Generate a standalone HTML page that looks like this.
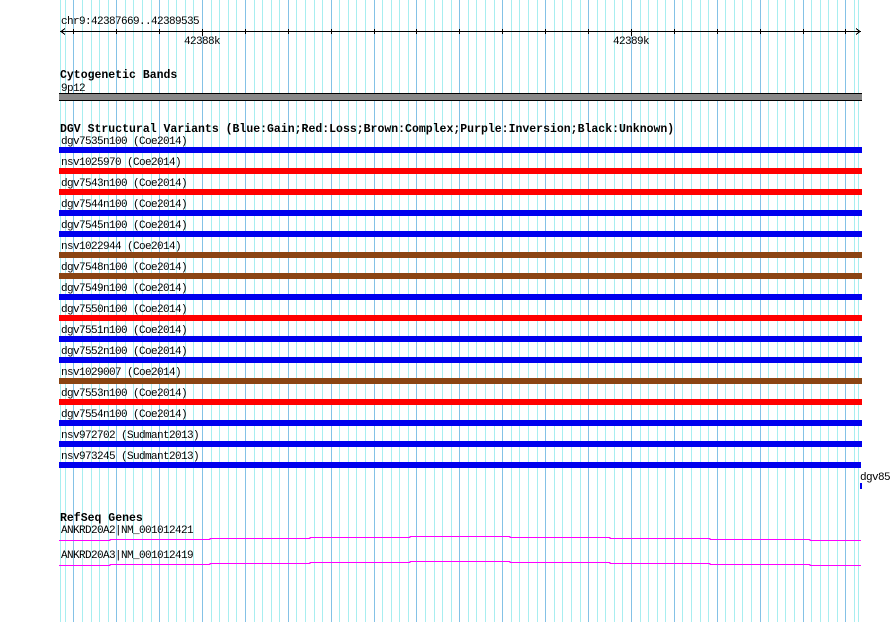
<!DOCTYPE html>
<html><head><meta charset="utf-8"><style>
html,body{margin:0;padding:0;background:#fff;width:890px;height:622px;overflow:hidden}
svg{display:block}
text{font-family:"Liberation Mono","DejaVu Sans Mono",monospace;font-size:11px;letter-spacing:-0.6px;fill:#000}
.b{font-weight:bold;font-size:11.5px;letter-spacing:0}
</style></head><body>
<svg width="890" height="622" xmlns="http://www.w3.org/2000/svg" shape-rendering="crispEdges">
<rect width="890" height="622" fill="#fff"/>
<g stroke="#a8eef0" stroke-width="1">
<path d="M60.5 0V622M65.5 0V622M82.5 0V622M91.5 0V622M99.5 0V622M108.5 0V622M125.5 0V622M133.5 0V622M142.5 0V622M151.5 0V622M168.5 0V622M176.5 0V622M185.5 0V622M193.5 0V622M211.5 0V622M219.5 0V622M228.5 0V622M236.5 0V622M254.5 0V622M262.5 0V622M271.5 0V622M279.5 0V622M296.5 0V622M305.5 0V622M314.5 0V622M322.5 0V622M339.5 0V622M348.5 0V622M356.5 0V622M365.5 0V622M382.5 0V622M391.5 0V622M399.5 0V622M408.5 0V622M425.5 0V622M434.5 0V622M442.5 0V622M451.5 0V622M468.5 0V622M476.5 0V622M485.5 0V622M494.5 0V622M511.5 0V622M519.5 0V622M528.5 0V622M537.5 0V622M554.5 0V622M562.5 0V622M571.5 0V622M580.5 0V622M597.5 0V622M605.5 0V622M614.5 0V622M622.5 0V622M640.5 0V622M648.5 0V622M657.5 0V622M665.5 0V622M682.5 0V622M691.5 0V622M700.5 0V622M708.5 0V622M725.5 0V622M734.5 0V622M742.5 0V622M751.5 0V622M768.5 0V622M777.5 0V622M785.5 0V622M794.5 0V622M811.5 0V622M820.5 0V622M828.5 0V622M837.5 0V622M854.5 0V622M858.5 0V622"/>
</g>
<g stroke="#84c2e6" stroke-width="1">
<path d="M73.5 0V622M116.5 0V622M159.5 0V622M202.5 0V622M245.5 0V622M288.5 0V622M331.5 0V622M374.5 0V622M416.5 0V622M459.5 0V622M502.5 0V622M545.5 0V622M588.5 0V622M631.5 0V622M674.5 0V622M717.5 0V622M760.5 0V622M803.5 0V622M845.5 0V622"/>
</g>
<text x="61" y="24">chr9:42387669..42389535</text>
<g stroke="#000">
<path d="M60 31.5H861"/>
<path d="M61 31.5L65 28.5M61 31.5L65 34.5M860 31.5L856 28.5M860 31.5L856 34.5"/>
<path d="M73.5 29V34M116.5 29V34M159.5 29V34M202.5 29V36M245.5 29V34M288.5 29V34M331.5 29V34M374.5 29V34M416.5 29V34M459.5 29V34M502.5 29V34M545.5 29V34M588.5 29V34M631.5 29V36M674.5 29V34M717.5 29V34M760.5 29V34M803.5 29V34M845.5 29V34"/>
</g>
<text x="184" y="44">42388k</text>
<text x="613" y="44">42389k</text>
<text class="b" x="60" y="78">Cytogenetic Bands</text>
<text x="61" y="91">9p12</text>
<rect x="59" y="93" width="803" height="8" fill="#000"/>
<rect x="59" y="94" width="803" height="6" fill="#888"/>
<text class="b" x="60" y="132">DGV Structural Variants (Blue:Gain;Red:Loss;Brown:Complex;Purple:Inversion;Black:Unknown)</text>
<text x="61" y="144">dgv7535n100 (Coe2014)</text><rect x="59" y="147" width="803" height="6" fill="#0000ee"/>
<text x="61" y="165">nsv1025970 (Coe2014)</text><rect x="59" y="168" width="803" height="6" fill="#ff0000"/>
<text x="61" y="186">dgv7543n100 (Coe2014)</text><rect x="59" y="189" width="803" height="6" fill="#ff0000"/>
<text x="61" y="207">dgv7544n100 (Coe2014)</text><rect x="59" y="210" width="803" height="6" fill="#0000ee"/>
<text x="61" y="228">dgv7545n100 (Coe2014)</text><rect x="59" y="231" width="803" height="6" fill="#0000ee"/>
<text x="61" y="249">nsv1022944 (Coe2014)</text><rect x="59" y="252" width="803" height="6" fill="#8b4513"/>
<text x="61" y="270">dgv7548n100 (Coe2014)</text><rect x="59" y="273" width="803" height="6" fill="#8b4513"/>
<text x="61" y="291">dgv7549n100 (Coe2014)</text><rect x="59" y="294" width="803" height="6" fill="#0000ee"/>
<text x="61" y="312">dgv7550n100 (Coe2014)</text><rect x="59" y="315" width="803" height="6" fill="#ff0000"/>
<text x="61" y="333">dgv7551n100 (Coe2014)</text><rect x="59" y="336" width="803" height="6" fill="#0000ee"/>
<text x="61" y="354">dgv7552n100 (Coe2014)</text><rect x="59" y="357" width="803" height="6" fill="#0000ee"/>
<text x="61" y="375">nsv1029007 (Coe2014)</text><rect x="59" y="378" width="803" height="6" fill="#8b4513"/>
<text x="61" y="396">dgv7553n100 (Coe2014)</text><rect x="59" y="399" width="803" height="6" fill="#ff0000"/>
<text x="61" y="417">dgv7554n100 (Coe2014)</text><rect x="59" y="420" width="803" height="6" fill="#0000ee"/>
<text x="61" y="438">nsv972702 (Sudmant2013)</text><rect x="59" y="441" width="803" height="6" fill="#0000ee"/>
<text x="61" y="459">nsv973245 (Sudmant2013)</text><rect x="59" y="462" width="802" height="6" fill="#0000ee"/>
<text x="860" y="480">dgv85</text>
<rect x="860" y="483" width="2" height="6" fill="#0000ee"/>
<text class="b" x="60" y="521">RefSeq Genes</text>
<text x="61" y="533">ANKRD20A2|NM_001012421</text>
<text x="61" y="558">ANKRD20A3|NM_001012419</text>
<g fill="none" stroke="#ff00ff" stroke-width="1">
<path d="M59 540.5H110V539.5H210V538.5H310V537.5H410V536.5H510V537.5H610V538.5H710V539.5H810V540.5H861"/>
<path d="M59 565.5H110V564.5H210V563.5H310V562.5H410V561.5H510V562.5H610V563.5H710V564.5H810V565.5H861"/>
</g>
</svg>
</body></html>
